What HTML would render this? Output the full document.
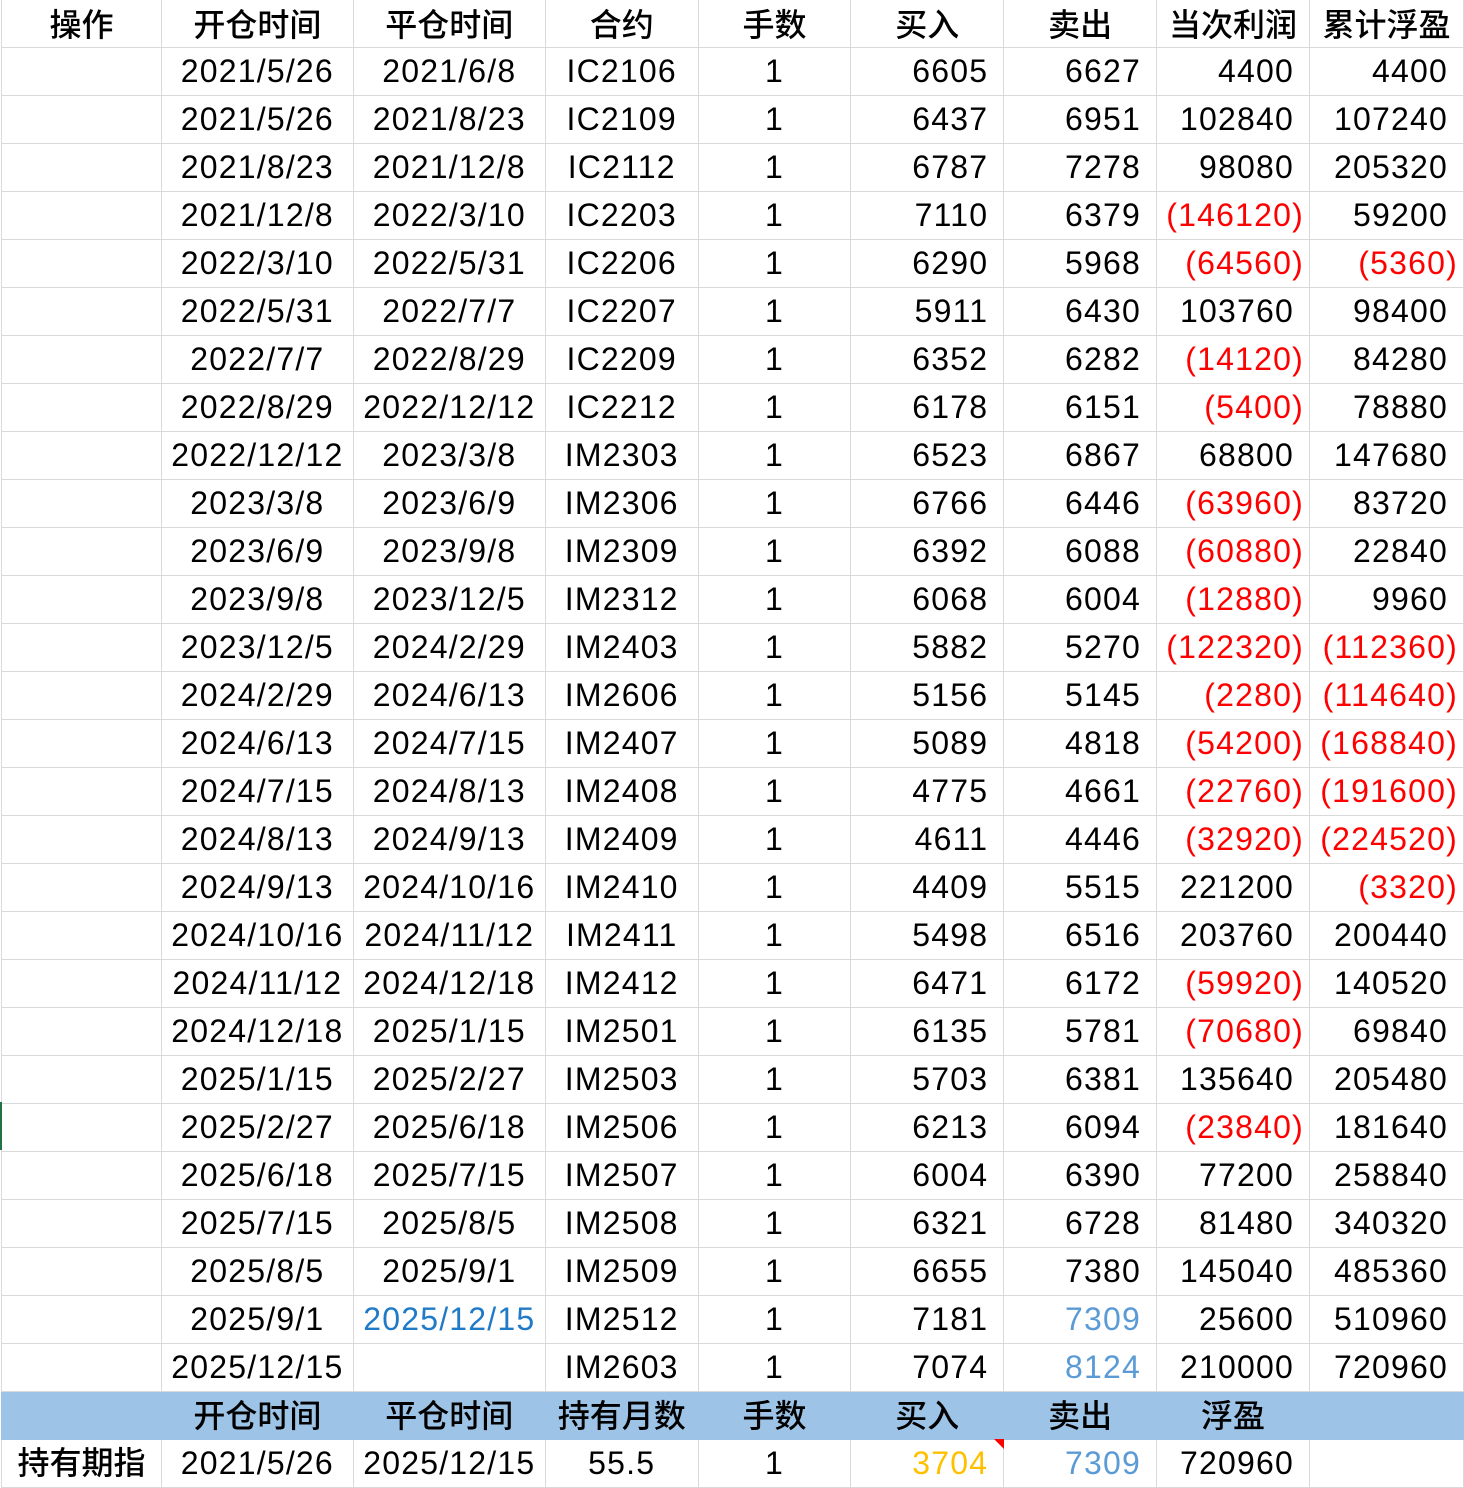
<!DOCTYPE html>
<html><head><meta charset="utf-8"><style>
body{margin:0;width:1464px;height:1479px;overflow:hidden;background:#fff;position:relative;
font-family:"Liberation Sans","Noto Sans CJK SC",sans-serif;}
table{position:absolute;left:1px;top:-1px;border-collapse:collapse;table-layout:fixed;}
td{border:1px solid #d9d9d9;height:47px;padding:0;font-size:32px;line-height:47px;white-space:nowrap;overflow:hidden;color:#000;letter-spacing:1.2px}
tr.h td{font-size:32px;text-align:center;font-weight:500;letter-spacing:0;line-height:43px;height:43px;padding-top:4px}
tr.b td{line-height:45px;height:45px;padding-top:2px}
td.c{text-align:center}
td.r{text-align:right;padding-right:15px}
td.n{text-align:right;padding-right:5px;color:#f00}
tr.b td{background:#9dc3e6;border-color:#9dc3e6}
.lb{color:#5b9bd5}.db{color:#1f7ac8}.or{color:#ffc000}
td.k{font-size:32px;font-weight:500;letter-spacing:0}
#g{position:absolute;left:0;top:1102px;width:2px;height:48px;background:#217346}
#tri{position:absolute;left:994px;top:1439px;width:0;height:0;border-top:10px solid #f00;border-left:10px solid transparent}
</style></head><body>
<table>
<colgroup><col style="width:160px"><col style="width:192px"><col style="width:192px"><col style="width:153px"><col style="width:153px"><col style="width:153px"><col style="width:153px"><col style="width:153px"><col style="width:154px"></colgroup>
<tr class="h"><td>操作</td><td>开仓时间</td><td>平仓时间</td><td>合约</td><td>手数</td><td>买入</td><td>卖出</td><td>当次利润</td><td>累计浮盈</td></tr>
<tr><td></td><td class="c">2021/5/26</td><td class="c">2021/6/8</td><td class="c">IC2106</td><td class="c">1</td><td class="r">6605</td><td class="r">6627</td><td class="r">4400</td><td class="r">4400</td></tr>
<tr><td></td><td class="c">2021/5/26</td><td class="c">2021/8/23</td><td class="c">IC2109</td><td class="c">1</td><td class="r">6437</td><td class="r">6951</td><td class="r">102840</td><td class="r">107240</td></tr>
<tr><td></td><td class="c">2021/8/23</td><td class="c">2021/12/8</td><td class="c">IC2112</td><td class="c">1</td><td class="r">6787</td><td class="r">7278</td><td class="r">98080</td><td class="r">205320</td></tr>
<tr><td></td><td class="c">2021/12/8</td><td class="c">2022/3/10</td><td class="c">IC2203</td><td class="c">1</td><td class="r">7110</td><td class="r">6379</td><td class="n">(146120)</td><td class="r">59200</td></tr>
<tr><td></td><td class="c">2022/3/10</td><td class="c">2022/5/31</td><td class="c">IC2206</td><td class="c">1</td><td class="r">6290</td><td class="r">5968</td><td class="n">(64560)</td><td class="n">(5360)</td></tr>
<tr><td></td><td class="c">2022/5/31</td><td class="c">2022/7/7</td><td class="c">IC2207</td><td class="c">1</td><td class="r">5911</td><td class="r">6430</td><td class="r">103760</td><td class="r">98400</td></tr>
<tr><td></td><td class="c">2022/7/7</td><td class="c">2022/8/29</td><td class="c">IC2209</td><td class="c">1</td><td class="r">6352</td><td class="r">6282</td><td class="n">(14120)</td><td class="r">84280</td></tr>
<tr><td></td><td class="c">2022/8/29</td><td class="c">2022/12/12</td><td class="c">IC2212</td><td class="c">1</td><td class="r">6178</td><td class="r">6151</td><td class="n">(5400)</td><td class="r">78880</td></tr>
<tr><td></td><td class="c">2022/12/12</td><td class="c">2023/3/8</td><td class="c">IM2303</td><td class="c">1</td><td class="r">6523</td><td class="r">6867</td><td class="r">68800</td><td class="r">147680</td></tr>
<tr><td></td><td class="c">2023/3/8</td><td class="c">2023/6/9</td><td class="c">IM2306</td><td class="c">1</td><td class="r">6766</td><td class="r">6446</td><td class="n">(63960)</td><td class="r">83720</td></tr>
<tr><td></td><td class="c">2023/6/9</td><td class="c">2023/9/8</td><td class="c">IM2309</td><td class="c">1</td><td class="r">6392</td><td class="r">6088</td><td class="n">(60880)</td><td class="r">22840</td></tr>
<tr><td></td><td class="c">2023/9/8</td><td class="c">2023/12/5</td><td class="c">IM2312</td><td class="c">1</td><td class="r">6068</td><td class="r">6004</td><td class="n">(12880)</td><td class="r">9960</td></tr>
<tr><td></td><td class="c">2023/12/5</td><td class="c">2024/2/29</td><td class="c">IM2403</td><td class="c">1</td><td class="r">5882</td><td class="r">5270</td><td class="n">(122320)</td><td class="n">(112360)</td></tr>
<tr><td></td><td class="c">2024/2/29</td><td class="c">2024/6/13</td><td class="c">IM2606</td><td class="c">1</td><td class="r">5156</td><td class="r">5145</td><td class="n">(2280)</td><td class="n">(114640)</td></tr>
<tr><td></td><td class="c">2024/6/13</td><td class="c">2024/7/15</td><td class="c">IM2407</td><td class="c">1</td><td class="r">5089</td><td class="r">4818</td><td class="n">(54200)</td><td class="n">(168840)</td></tr>
<tr><td></td><td class="c">2024/7/15</td><td class="c">2024/8/13</td><td class="c">IM2408</td><td class="c">1</td><td class="r">4775</td><td class="r">4661</td><td class="n">(22760)</td><td class="n">(191600)</td></tr>
<tr><td></td><td class="c">2024/8/13</td><td class="c">2024/9/13</td><td class="c">IM2409</td><td class="c">1</td><td class="r">4611</td><td class="r">4446</td><td class="n">(32920)</td><td class="n">(224520)</td></tr>
<tr><td></td><td class="c">2024/9/13</td><td class="c">2024/10/16</td><td class="c">IM2410</td><td class="c">1</td><td class="r">4409</td><td class="r">5515</td><td class="r">221200</td><td class="n">(3320)</td></tr>
<tr><td></td><td class="c">2024/10/16</td><td class="c">2024/11/12</td><td class="c">IM2411</td><td class="c">1</td><td class="r">5498</td><td class="r">6516</td><td class="r">203760</td><td class="r">200440</td></tr>
<tr><td></td><td class="c">2024/11/12</td><td class="c">2024/12/18</td><td class="c">IM2412</td><td class="c">1</td><td class="r">6471</td><td class="r">6172</td><td class="n">(59920)</td><td class="r">140520</td></tr>
<tr><td></td><td class="c">2024/12/18</td><td class="c">2025/1/15</td><td class="c">IM2501</td><td class="c">1</td><td class="r">6135</td><td class="r">5781</td><td class="n">(70680)</td><td class="r">69840</td></tr>
<tr><td></td><td class="c">2025/1/15</td><td class="c">2025/2/27</td><td class="c">IM2503</td><td class="c">1</td><td class="r">5703</td><td class="r">6381</td><td class="r">135640</td><td class="r">205480</td></tr>
<tr><td></td><td class="c">2025/2/27</td><td class="c">2025/6/18</td><td class="c">IM2506</td><td class="c">1</td><td class="r">6213</td><td class="r">6094</td><td class="n">(23840)</td><td class="r">181640</td></tr>
<tr><td></td><td class="c">2025/6/18</td><td class="c">2025/7/15</td><td class="c">IM2507</td><td class="c">1</td><td class="r">6004</td><td class="r">6390</td><td class="r">77200</td><td class="r">258840</td></tr>
<tr><td></td><td class="c">2025/7/15</td><td class="c">2025/8/5</td><td class="c">IM2508</td><td class="c">1</td><td class="r">6321</td><td class="r">6728</td><td class="r">81480</td><td class="r">340320</td></tr>
<tr><td></td><td class="c">2025/8/5</td><td class="c">2025/9/1</td><td class="c">IM2509</td><td class="c">1</td><td class="r">6655</td><td class="r">7380</td><td class="r">145040</td><td class="r">485360</td></tr>
<tr><td></td><td class="c">2025/9/1</td><td class="c db">2025/12/15</td><td class="c">IM2512</td><td class="c">1</td><td class="r">7181</td><td class="r lb">7309</td><td class="r">25600</td><td class="r">510960</td></tr>
<tr><td></td><td class="c">2025/12/15</td><td class="c"></td><td class="c">IM2603</td><td class="c">1</td><td class="r">7074</td><td class="r lb">8124</td><td class="r">210000</td><td class="r">720960</td></tr>
<tr class="h b"><td></td><td>开仓时间</td><td>平仓时间</td><td>持有月数</td><td>手数</td><td>买入</td><td>卖出</td><td>浮盈</td><td></td></tr>
<tr><td class="c k">持有期指</td><td class="c">2021/5/26</td><td class="c">2025/12/15</td><td class="c">55.5</td><td class="c">1</td><td class="r or">3704</td><td class="r lb">7309</td><td class="r">720960</td><td></td></tr>
</table>
<div id="g"></div><div id="tri"></div>
</body></html>
